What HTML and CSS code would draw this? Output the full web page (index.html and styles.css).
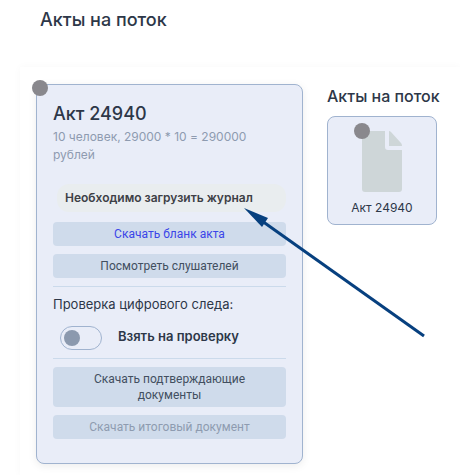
FILE: index.html
```html
<!DOCTYPE html>
<html lang="ru">
<head>
<meta charset="utf-8">
<meta name="viewport" content="width=device-width, initial-scale=1">
<title>Акты на поток</title>
<link rel="stylesheet" href="styles.css">
</head>
<body>
<h1 class="page-title">Акты на поток</h1>
<main class="panel">
  <article class="act">
    <span class="status-dot act-dot"></span>
    <h2 class="act-title">Акт 24940</h2>
    <p class="act-info">10 человек, 29000 * 10 = 290000 рублей</p>
    <p class="notice">Необходимо загрузить журнал</p>
    <div class="actions">
      <button class="btn btn-link" type="button">Скачать бланк акта</button>
      <button class="btn" type="button">Посмотреть слушателей</button>
    </div>
    <section class="check">
      <h3 class="check-title">Проверка цифрового следа:</h3>
      <label class="switch-row">
        <input class="switch" type="checkbox" role="switch">
        <span class="switch-label">Взять на проверку</span>
      </label>
    </section>
    <div class="actions">
      <button class="btn" type="button">Скачать подтверждающие документы</button>
      <button class="btn" type="button" disabled>Скачать итоговый документ</button>
    </div>
  </article>
  <aside class="side">
    <h2 class="side-title">Акты на поток</h2>
    <a class="file" href="#act-24940">
      <span class="file-picture">
        <span class="status-dot file-dot"></span>
        <svg class="file-icon" viewBox="0 0 40 61" aria-hidden="true">
          <path d="M3 0H23V16Q23 19 26 19H40V58Q40 61 37 61H3Q0 61 0 58V3Q0 0 3 0Z"/>
          <path d="M27 0Q28 0 29 1L39 12Q40 13 40 15H27Z"/>
        </svg>
      </span>
      <span class="file-name">Акт 24940</span>
    </a>
  </aside>
  <svg class="pointer" viewBox="0 0 182 130" aria-hidden="true">
    <path class="pointer-line" d="M18 13L180 128"/>
    <path class="pointer-head" d="M0 0L24 10L18 19Z"/>
  </svg>
</main>
</body>
</html>
```

FILE: styles.css
```css
* {
  box-sizing: border-box;
}

body {
  margin: 0;
  background: #fff;
  color: #2d3748;
  font: 400 12px/16px Inter, "Liberation Sans", sans-serif;
  font-feature-settings: "calt" 0;
}

h1, h2, h3, p {
  margin: 0;
}

.page-title {
  padding: 8px 40px 35px;
  font-size: 18px;
  font-weight: 500;
  line-height: 24px;
}

.panel {
  position: relative;
  display: grid;
  grid-template-columns: 1fr 110px;
  align-items: start;
  gap: 24px;
  margin-left: 20px;
  padding: 17px 23px 12px 16px;
  box-shadow: 0 0 8px rgba(0, 0, 0, 0.03);
}

.act {
  position: relative;
  padding: 16px 16px 24px;
  border: 1px solid #a0b3cf;
  border-radius: 8px;
  background: #e9edf8;
  box-shadow: 0 2px 8px rgba(0, 0, 0, 0.08);
}

.status-dot {
  position: absolute;
  width: 16px;
  height: 16px;
  border-radius: 50%;
  background: #89888d;
}

.act-dot {
  top: -5px;
  left: -5px;
}

.act-title {
  font-size: 18px;
  font-weight: 500;
  line-height: 26px;
}

.act-info {
  padding-top: 1px;
  color: #8e9bb0;
  line-height: 18px;
}

.notice {
  margin: 20px 0 10px 4px;
  padding: 6px 8px;
  border-radius: 12px;
  background: #e9edef;
  color: #3d4046;
  font-weight: 600;
}

.actions {
  display: grid;
  gap: 8px;
}

.btn {
  padding: 4px 32px;
  border: 0;
  border-radius: 4px;
  background: #cfdbeb;
  color: #424f60;
  font: 400 12px/16px Roboto, "Liberation Sans", sans-serif;
}

.btn-link {
  color: #3b46e8;
}

.btn:disabled {
  color: #8e9bb0;
}

.check {
  margin: 8px 0;
  padding: 7px 0 8px;
  border-top: 1px solid #cbdaeb;
  border-bottom: 1px solid #cbdaeb;
}

.check-title {
  font-size: 13px;
  font-weight: 400;
  line-height: 20px;
}

.switch-row {
  display: flex;
  gap: 16px;
  margin: 12px 0 0 7px;
}

.switch {
  display: flex;
  align-items: center;
  width: 42px;
  height: 24px;
  margin: 0;
  padding: 0 3px;
  appearance: none;
  border: 1px solid #a0b3cf;
  border-radius: 12px;
}

.switch::before {
  width: 16px;
  height: 16px;
  border-radius: 50%;
  background: #8b99ae;
  content: "";
}

.switch:checked::before {
  margin-left: auto;
}

.switch-label {
  font-size: 13px;
  font-weight: 600;
  line-height: 20px;
}

.side-title {
  font-size: 16px;
  font-weight: 500;
  line-height: 24px;
  white-space: nowrap;
}

.file {
  display: flex;
  flex-direction: column;
  align-items: center;
  gap: 8px;
  margin-top: 8px;
  padding: 14px 8px 8px;
  border: 1px solid #a0b3cf;
  border-radius: 8px;
  background: #e9edf8;
  color: inherit;
  text-decoration: none;
}

.file-picture {
  position: relative;
  display: flex;
}

.file-dot {
  top: -8px;
  left: -8px;
}

.file-icon {
  width: 40px;
  height: 61px;
  fill: #ced6d8;
}

.pointer {
  position: absolute;
  top: 141px;
  left: 224px;
  width: 182px;
  height: 130px;
  pointer-events: none;
}

.pointer-line {
  fill: none;
  stroke: #07407f;
  stroke-width: 3;
}

.pointer-head {
  fill: #07407f;
}
```
